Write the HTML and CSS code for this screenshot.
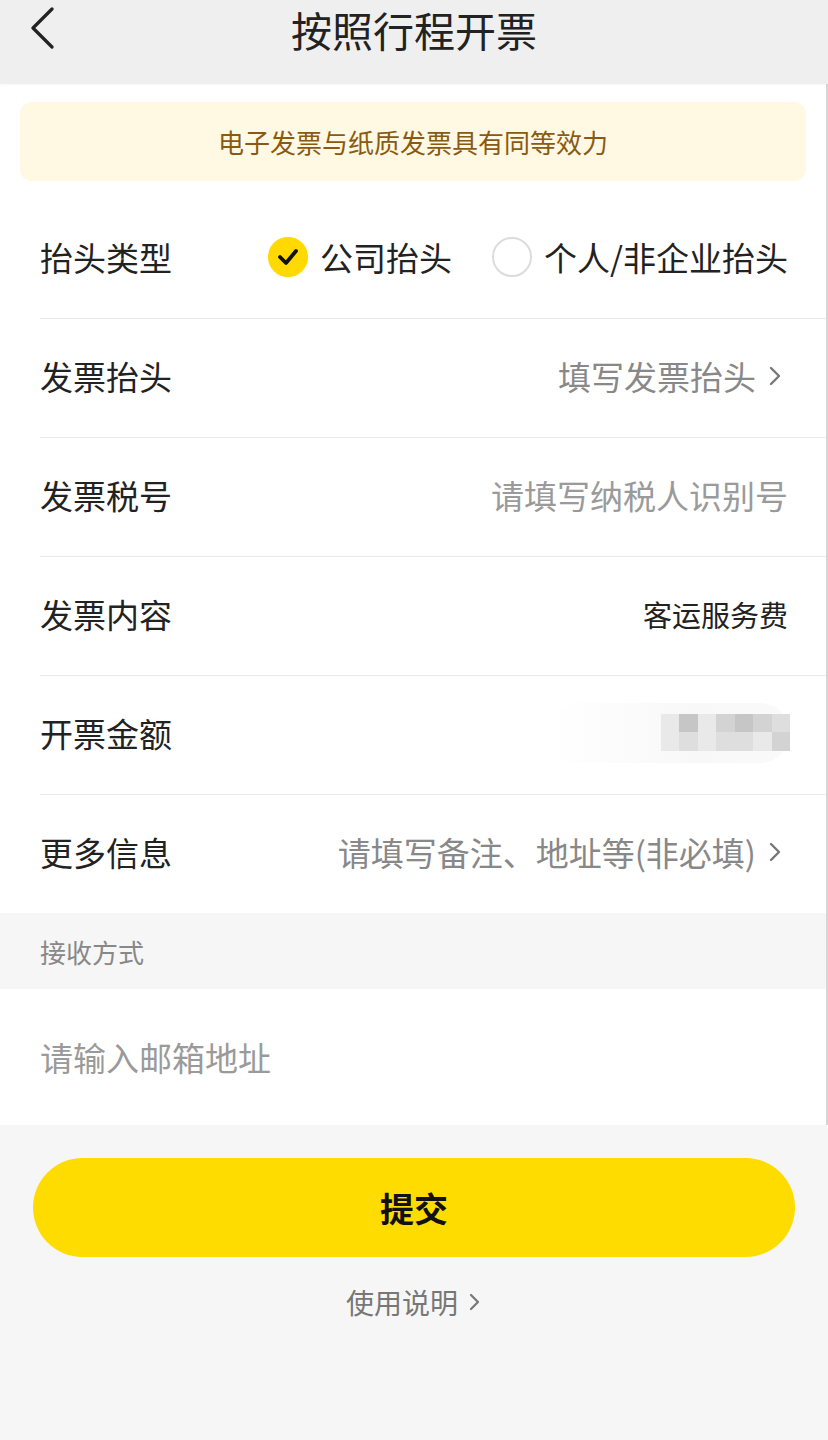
FILE: index.html
```html
<!DOCTYPE html>
<html lang="zh-CN">
<head>
  <meta charset="UTF-8">
  <title>按照行程开票</title>
  <link rel="stylesheet" href="styles.css">
</head>
<body>

  <div class="header">
    <svg class="back" width="30" height="44" viewBox="0 0 30 44">
      <polyline points="24,4 5,23 24,42" fill="none" stroke="#222" stroke-width="3.2" stroke-linecap="round" stroke-linejoin="round"/>
    </svg>
    <h1>按照行程开票</h1>
  </div>

  <div class="content">
    <div class="notice">电子发票与纸质发票具有同等效力</div>

    <div class="form">
      <div class="row">
        <span class="label">抬头类型</span>
        <div class="radios">
          <span class="radio checked">
            <svg width="22" height="18" viewBox="0 0 22 18">
              <polyline points="3,9 9,15 19,3" fill="none" stroke="#111" stroke-width="3.8" stroke-linecap="round" stroke-linejoin="round"/>
            </svg>
          </span>
          <span class="radio-text">公司抬头</span>
          <span class="radio"></span>
          <span class="radio-text">个人/非企业抬头</span>
        </div>
      </div>

      <div class="row">
        <span class="label">发票抬头</span>
        <span class="value muted">填写发票抬头<svg class="arrow" width="14" height="22" viewBox="0 0 14 22"><polyline points="3,3 11,11 3,19" fill="none" stroke="#777" stroke-width="2.4" stroke-linecap="round" stroke-linejoin="round"/></svg></span>
      </div>

      <div class="row">
        <span class="label">发票税号</span>
        <span class="value placeholder">请填写纳税人识别号</span>
      </div>

      <div class="row">
        <span class="label">发票内容</span>
        <span class="value small">客运服务费</span>
      </div>

      <div class="row">
        <span class="label">开票金额</span>
        <div class="blurred">
          <div class="pix">
            <i class="s1"></i><i class="s4"></i><i class="s1"></i><i class="s3"></i><i class="s4"></i><i class="s3"></i><i class="s2"></i>
            <i class="s1"></i><i class="s2"></i><i class="s1"></i><i class="s2"></i><i class="s2"></i><i class="s1"></i><i class="s3"></i>
          </div>
        </div>
      </div>

      <div class="row">
        <span class="label">更多信息</span>
        <span class="value muted">请填写备注、地址等(非必填)<svg class="arrow" width="14" height="22" viewBox="0 0 14 22"><polyline points="3,3 11,11 3,19" fill="none" stroke="#777" stroke-width="2.4" stroke-linecap="round" stroke-linejoin="round"/></svg></span>
      </div>
    </div>

    <div class="section-title">接收方式</div>

    <div class="mail">
      <input type="text" placeholder="请输入邮箱地址">
    </div>
  </div>

  <div class="footer">
    <button class="submit">提交</button>
    <div class="help">使用说明<svg width="14" height="20" viewBox="0 0 14 20"><polyline points="3,3 10,10 3,17" fill="none" stroke="#777" stroke-width="2.2" stroke-linecap="round" stroke-linejoin="round"/></svg></div>
  </div>

</body>
</html>
```

FILE: styles.css
```css
body {
  margin: 0;
  font-family: "Noto Sans CJK SC", "Noto Sans", sans-serif;
  background: #f6f6f6;
  color: #222;
  width: 828px;
  min-height: 1440px;
}
.header {
  height: 84px;
  background: #efefef;
  display: flex;
  align-items: center;
  justify-content: center;
  position: relative;
  box-shadow: 0 1px 2px rgba(0, 0, 0, 0.04);
}
.header h1 {
  margin: 0;
  margin-top: -27px;
  font-size: 41px;
  font-weight: normal;
  color: #222;
}
.back {
  position: absolute;
  left: 28px;
  top: 5px;
}
.content {
  background: #fff;
  border-right: 2px solid #d6d6d6;
  padding-top: 18px;
}
.notice {
  margin: 0 20px;
  height: 79px;
  background: #fff8e3;
  border-radius: 12px;
  display: flex;
  align-items: center;
  justify-content: center;
  font-size: 26px;
  color: #8a5a12;
}
.form {
  margin-top: 19px;
  padding-left: 40px;
}
.row {
  height: 118px;
  display: flex;
  align-items: center;
  justify-content: space-between;
  padding-right: 40px;
  border-bottom: 1px solid #e9e9e9;
}
.row:last-child {
  border-bottom: none;
}
.row > * {
  margin-bottom: 5px;
}
.label {
  font-size: 33px;
  color: #222;
}
.radios {
  display: flex;
  align-items: center;
  margin-right: -2px;
}
.radio {
  width: 36px;
  height: 36px;
  border: 2px solid #dcdcdc;
  border-radius: 50%;
  display: flex;
  align-items: center;
  justify-content: center;
  margin-right: 12px;
}
.radio.checked {
  background: #ffd900;
  border-color: #ffd900;
}
.radio-text {
  font-size: 33px;
  color: #222;
  margin-right: 40px;
}
.radio-text:last-child {
  margin-right: 0;
}
.value {
  font-size: 33px;
  display: flex;
  align-items: center;
}
.value.muted {
  color: #888;
  margin-right: 4px;
}
.value.placeholder {
  color: #9a9a9a;
  margin-right: -2px;
}
.value.small {
  font-size: 29px;
  color: #222;
  margin-right: -2px;
}
.arrow {
  margin-left: 12px;
}
.blurred {
  width: 240px;
  height: 60px;
  display: flex;
  align-items: center;
  justify-content: flex-end;
  background: linear-gradient(90deg, rgba(250, 250, 250, 0), #f8f8f8 60%, #fafafa);
  border-radius: 30px;
  margin-right: -4px;
}
.pix {
  display: grid;
  grid-template-columns: repeat(7, 18.5px);
  grid-template-rows: 18px 19px;
  filter: blur(0.4px);
}
.pix i {
  display: block;
}
.s1 { background: #e9e9e9; }
.s2 { background: #dedede; }
.s3 { background: #d3d3d3; }
.s4 { background: #c6c6c6; }
.section-title {
  height: 76px;
  background: #f6f6f6;
  padding-left: 40px;
  display: flex;
  align-items: center;
  font-size: 26px;
  color: #888;
}
.mail {
  height: 136px;
  display: flex;
  align-items: center;
  padding: 0 40px;
}
.mail input {
  border: none;
  outline: none;
  width: 100%;
  font-family: inherit;
  font-size: 33px;
  color: #222;
  background: transparent;
  padding: 0;
}
.mail input::placeholder {
  color: #9a9a9a;
}
.footer {
  padding: 33px 33px 0;
  display: flex;
  flex-direction: column;
  align-items: center;
}
.submit {
  width: 100%;
  height: 99px;
  border: none;
  border-radius: 50px;
  background: #ffdc00;
  font-family: inherit;
  font-size: 34px;
  font-weight: bold;
  color: #111;
}
.help {
  margin-top: 25px;
  font-size: 28px;
  color: #777;
  display: flex;
  align-items: center;
}
.help svg {
  margin-left: 10px;
}
```
